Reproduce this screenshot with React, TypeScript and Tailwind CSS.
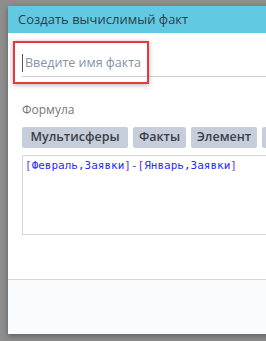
export default function App() {
  const br = "text-[#6a2cf0]";
  const tx = "text-[#1f2cff]";
  return (
    <div className="w-[266px] h-[341px] overflow-hidden bg-[#8e8e8e] pl-[8px] pt-[6px] font-['Open_Sans',sans-serif]">
      <div className="relative flex h-[328px] w-[300px] flex-col bg-white shadow-[0_2px_6px_rgba(0,0,0,0.35)]">
        <div className="flex h-[27px] items-center bg-[#62c9e3] px-[10px] text-[13px] text-[#2f3d48]">
          Создать вычислимый факт
        </div>

        <div className="flex flex-1 flex-col">
          <div className="ml-[14px] mt-[17px] flex h-[27px] items-center border-b border-[#d2d2d2]">
            <span className="h-[18px] w-px bg-[#555]" />
            <span className="ml-[2px] text-[12.5px] text-[#8593a5]">Введите имя факта</span>
          </div>

          <div className="ml-[14px] mt-[25px] text-[12px] leading-[16px] text-[#777]">Формула</div>

          <div className="ml-[14px] mt-[9px] flex gap-[5px] text-[12.5px] font-semibold text-[#3a3f47]">
            <div className="flex h-[21px] w-[106px] shrink-0 items-center justify-center rounded-[2px] bg-[#c6cedb]">
              Мультисферы
            </div>
            <div className="flex h-[21px] w-[53px] shrink-0 items-center justify-center rounded-[2px] bg-[#c6cedb]">
              Факты
            </div>
            <div className="flex h-[21px] w-[66px] shrink-0 items-center justify-center rounded-[2px] bg-[#c6cedb]">
              Элемент
            </div>
            <div className="h-[21px] w-[60px] shrink-0 rounded-[2px] bg-[#c6cedb]" />
          </div>

          <div className="ml-[14px] mt-[7px] h-[80px] border border-[#d6d6d6] px-[2px] pt-[3px] font-['DejaVu_Sans_Mono',monospace] text-[11px] leading-[14px]">
            <span className={br}>[</span>
            <span className={tx}>Февраль,Заявки</span>
            <span className={br}>]</span>
            <span className="text-[#555]">-</span>
            <span className={br}>[</span>
            <span className={tx}>Январь,Заявки</span>
            <span className={br}>]</span>
          </div>
        </div>

        <div className="h-[55px] border-t border-[#d6d6d6] bg-[#fafbfd]" />

        <div className="absolute left-[5px] top-[35px] h-[43px] w-[136px] border-2 border-[#e8383d] shadow-[0_1px_5px_rgba(0,0,0,0.3)]" />
      </div>
    </div>
  );
}
